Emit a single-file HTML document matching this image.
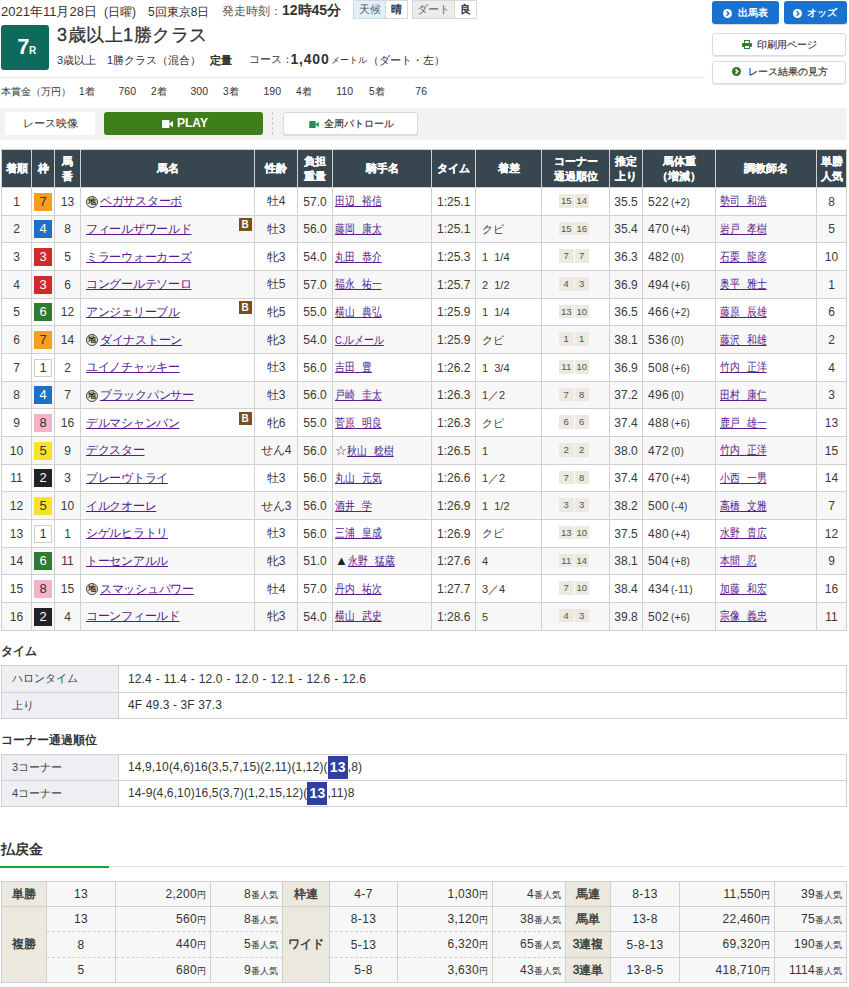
<!DOCTYPE html>
<html><head><meta charset="utf-8">
<style>
*{box-sizing:border-box;margin:0;padding:0}
html,body{width:849px;height:987px;overflow:hidden;background:#fff}
body{font-family:"Liberation Sans",sans-serif;color:#333;font-size:12px;position:relative}
.abs{position:absolute;white-space:nowrap}
a{color:#551a8b;text-decoration:underline}
b{font-weight:bold}
.rbox{left:1px;top:25px;width:48px;height:45px;background:#0d6a5c;border-radius:3px;color:#fff;font-weight:bold}
.btn-blue{background:#1a72cf;color:#fff;border-radius:3px;font-weight:bold;font-size:10px;text-align:center;height:23px;line-height:23px;top:1px;box-shadow:0 1px 1px rgba(0,0,0,.15)}
.btn-w{background:#fff;border:1px solid #dcdcdc;border-radius:3px;font-size:11px;text-align:center;box-shadow:0 1px 1px rgba(0,0,0,.10);-webkit-text-stroke:0.15px #333}
.dot{border-top:1px dotted #d2d2d2}
.wx{top:0;height:19px;border:1px solid #d8d8d8;font-size:10.5px;line-height:17px}
.wx span{display:inline-block;height:17px;vertical-align:top;text-align:center}
table{border-collapse:separate;border-spacing:0;table-layout:fixed}
#res{position:absolute;left:1px;top:149px;width:846px;border-top:1px solid #d0d0d0;border-left:1px solid #d0d0d0}
#res th,#res td{border-right:1px solid #d0d0d0;border-bottom:1px solid #d0d0d0;padding:0;white-space:nowrap;overflow:hidden}
#res th{background:#37464f;color:#fff;font-weight:bold;font-size:11px;line-height:14.5px;height:38px;-webkit-text-stroke:0.2px #fff}
#res td{font-size:12px;text-align:center;height:27.66px;padding-top:1px;color:#3a3a3a}
#res tr.e td{background:#f7f7f7}
#res td.nm,#res td.jk,#res td.df,#res td.bw,#res td.tr{text-align:left}
#res td.nm{padding-left:5px;position:relative;font-size:12px;letter-spacing:-0.3px}
#res td.jk{padding-left:2px;font-size:11.5px}
.sp{letter-spacing:5.5px}
.mk{font-size:13px;color:#222}
.sx{display:inline-block;transform:scaleX(0.82);transform-origin:0 50%}
#res td.tm{text-align:left;padding-left:5px}
#res td.df{padding-left:6px;font-size:11px}
.kb{font-size:10px}
#res td.bw{padding-left:5px;letter-spacing:0.3px}
#res td.cn{padding-right:3px}
#res td.bw small{font-size:10px;margin-left:2px}
#res td.tr{padding-left:4px;font-size:11.5px}
.wk{display:inline-block;width:18px;height:18px;line-height:18px;text-align:center;vertical-align:middle;font-size:13px}
.w1{background:#fff;border:1px solid #ccc;line-height:16px}
.w2{background:#222;color:#fff}
.w3{background:#d12a2a;color:#fff}
.w4{background:#1e6fc8;color:#fff}
.w5{background:#f7e22a;color:#333}
.w6{background:#2c7d32;color:#fff}
.w7{background:#f59e21;color:#333}
.w8{background:#f4b3c8;color:#333}
.chi{display:inline-block;width:12px;height:12px;border:1.5px solid #444;border-radius:50%;background:#e8e8e8;font-size:7.5px;line-height:9px;text-align:center;vertical-align:middle;margin-right:2px;font-weight:bold;color:#222}
.bl{position:absolute;right:2.5px;top:2.5px;width:13px;height:13px;background:#7a4f1c;color:#fff;font-size:10px;font-weight:bold;line-height:13px;text-align:center}
.cb{display:inline-block;width:14.5px;height:13.5px;line-height:13.5px;background:#ebe9e0;font-size:9.5px;margin:0 0.5px;vertical-align:middle;color:#555;position:relative;top:-1.5px}
.sec{font-size:11.5px;font-weight:bold}
.kt{position:absolute;left:1px;width:846px;border-top:1px solid #d0d0d0;border-left:1px solid #d0d0d0}
.kt td{border-right:1px solid #d0d0d0;border-bottom:1px solid #d0d0d0;height:26.5px;padding:0 0 0 9px;letter-spacing:0.12px}
.kt td.l{padding-left:10px;font-size:11px;letter-spacing:0;color:#444}
.kt td.l{background:#edeff2;width:117px}
.k2 td{height:26px}
.hl{display:inline-block;background:#303f9f;color:#fff;font-weight:bold;font-size:14px;width:20px;height:23px;line-height:23px;text-align:center;vertical-align:middle}
.pt{position:absolute;top:881px;border-top:1px solid #d0d0d0;border-left:1px solid #d0d0d0}
.pt td{border-right:1px solid #d0d0d0;border-bottom:1px solid #d0d0d0;height:25px;padding:0;background:#f7f7f7;text-align:center;white-space:nowrap;letter-spacing:0.4px}
.pt td.l{background:#ebe9dd;color:#3a3a3a;-webkit-text-stroke:0.45px #3a3a3a;letter-spacing:0}
.pt td.r{text-align:right;padding-right:4px;letter-spacing:0.3px}
.pt tr.d td{border-bottom:1px dashed #d0d0d0}
.pt tr.d td.l{border-bottom:1px solid #d0d0d0}
.pt tr.t td{height:26px}
.pt small{font-size:9px;letter-spacing:0}
</style></head><body>

<div class="abs" style="left:1px;top:3px;font-size:13px">2021年11月28日</div><div class="abs" style="left:104px;top:4px;font-size:12px">(日曜)</div><div class="abs" style="left:148px;top:4px;font-size:12px">5回東京8日</div>
<div class="abs" style="left:222px;top:3px;font-size:12px;color:#555">発走時刻：</div>
<div class="abs" style="left:282px;top:2px;font-size:14px;font-weight:bold">12時45分</div>
<div class="abs wx" style="left:353px;width:55px"><span style="width:32px;background:#e1f1fc;border-right:1px dashed #d0d0d0;color:#555">天候</span><span style="width:21px;font-weight:bold">晴</span></div>
<div class="abs wx" style="left:412px;width:65px"><span style="width:42px;background:#eeecea;border-right:1px dashed #d0d0d0;color:#666">ダート</span><span style="width:21px;font-weight:bold">良</span></div>

<div class="abs rbox"><span style="position:absolute;left:16.3px;top:11px;font-size:22px;line-height:22px">7</span><span style="position:absolute;left:28px;top:21px;font-size:10px;line-height:10px">R</span></div>
<div class="abs" style="left:57px;top:24px;font-size:18px;line-height:22px;letter-spacing:0.5px;-webkit-text-stroke:0.3px #333">3歳以上1勝クラス</div>
<div class="abs" style="left:57px;top:53px;font-size:11px">3歳以上　1勝クラス（混合）</div>
<div class="abs" style="left:210px;top:53px;font-size:11px;-webkit-text-stroke:0.5px #333">定量</div>
<div class="abs" style="left:249px;top:53px;font-size:10.5px">コース：</div>
<div class="abs" style="left:290.5px;top:51px;font-size:14px;font-weight:bold;letter-spacing:0.8px">1,400</div>
<div class="abs" style="left:331px;top:54px;font-size:9px">メートル</div>
<div class="abs" style="left:367.5px;top:53px;font-size:11px">（ダート・左）</div>

<div class="abs btn-blue" style="left:712px;width:67px"><svg width="9" height="9" viewBox="0 0 10 10" style="position:absolute;left:11px;top:7.5px"><circle cx="5" cy="5" r="5" fill="#fff"/><path d="M4 2.6 L6.4 5 L4 7.4" stroke="#1a72cf" stroke-width="1.6" fill="none"/></svg><span style="position:absolute;left:26px;top:0">出馬表</span></div>
<div class="abs btn-blue" style="left:784px;width:63px"><svg width="9" height="9" viewBox="0 0 10 10" style="position:absolute;left:9px;top:7.5px"><circle cx="5" cy="5" r="5" fill="#fff"/><path d="M4 2.6 L6.4 5 L4 7.4" stroke="#1a72cf" stroke-width="1.6" fill="none"/></svg><span style="position:absolute;left:23px;top:0">オッズ</span></div>
<div class="abs btn-w" style="left:712px;top:33px;width:134px;height:23px;line-height:21px;font-size:10px"><svg width="10" height="9" viewBox="0 0 10 9" style="position:absolute;left:29px;top:6px"><rect x="2.5" y="0.5" width="5" height="3" fill="none" stroke="#2e7d32" stroke-width="1"/><rect x="0" y="3" width="10" height="4" rx="1" fill="#2e7d32"/><rect x="2.5" y="5.5" width="5" height="3" fill="#fff" stroke="#2e7d32" stroke-width="1"/></svg><span style="position:absolute;left:44px;top:0">印刷用ページ</span></div>
<div class="abs btn-w" style="left:712px;top:61px;width:134px;height:23px;line-height:21px;font-size:10px"><svg width="9" height="9" viewBox="0 0 10 10" style="position:absolute;left:19px;top:5px"><circle cx="5" cy="5" r="5" fill="#2e7d32"/><path d="M4 2.6 L6.4 5 L4 7.4" stroke="#fff" stroke-width="1.7" fill="none"/></svg><span style="position:absolute;left:35px;top:-1.5px">レース結果の見方</span></div>

<div class="abs dot" style="left:0;top:77px;width:703px"></div>

<div class="abs" style="left:1px;top:85px;font-size:10px">本賞金（万円）</div>
<div class="abs" style="left:79px;top:85px;font-size:10px">1着</div>
<div class="abs" style="left:118px;top:85px;font-size:10.5px;width:18px;text-align:right">760</div>
<div class="abs" style="left:151px;top:85px;font-size:10px">2着</div>
<div class="abs" style="left:190px;top:85px;font-size:10.5px;width:18px;text-align:right">300</div>
<div class="abs" style="left:223px;top:85px;font-size:10px">3着</div>
<div class="abs" style="left:263px;top:85px;font-size:10.5px;width:18px;text-align:right">190</div>
<div class="abs" style="left:296px;top:85px;font-size:10px">4着</div>
<div class="abs" style="left:335px;top:85px;font-size:10.5px;width:18px;text-align:right">110</div>
<div class="abs" style="left:369px;top:85px;font-size:10px">5着</div>
<div class="abs" style="left:409px;top:85px;font-size:10.5px;width:18px;text-align:right">76</div>

<div class="abs" style="left:0;top:108px;width:847px;height:32px;background:#f2f2f2"></div>
<div class="abs" style="left:5px;top:112px;width:90px;height:23px;background:#fff;font-size:11px;line-height:23px;text-align:center">レース映像</div>
<div class="abs" style="left:104px;top:112px;width:159px;height:23px;background:#3f7f1b;border-radius:3px;color:#fff;font-weight:bold;font-size:12px;line-height:23px;text-align:center"><svg width="11" height="8" viewBox="0 0 11 8" style="position:absolute;left:58px;top:8px"><rect x="0" y="0" width="7.5" height="8" rx="1" fill="#fff"/><path d="M7 4 L11 0.8 L11 7.2 Z" fill="#fff"/></svg><span style="position:absolute;left:73px;top:0">PLAY</span></div>
<div class="abs" style="left:272px;top:112px;height:23px;border-left:1px dashed #c8c8c8"></div>
<div class="abs btn-w" style="left:283px;top:112px;width:135px;height:23px;line-height:21px;font-size:10px"><svg width="10" height="7" viewBox="0 0 11 8" style="position:absolute;left:25px;top:7.5px"><rect x="0" y="0" width="7.5" height="8" rx="1" fill="#2e8b57"/><path d="M7 4 L11 0.8 L11 7.2 Z" fill="#2e8b57"/></svg><span style="position:absolute;left:40px;top:0">全周パトロール</span></div>

<table id="res">
<colgroup><col style="width:30px"><col style="width:23px"><col style="width:26px"><col style="width:174px"><col style="width:43px"><col style="width:35px"><col style="width:99px"><col style="width:44px"><col style="width:66px"><col style="width:68px"><col style="width:33px"><col style="width:73px"><col style="width:101px"><col style="width:30px"></colgroup>
<tr><th>着順</th><th>枠</th><th>馬<br>番</th><th>馬名</th><th>性齢</th><th>負担<br>重量</th><th>騎手名</th><th>タイム</th><th>着差</th><th>コーナー<br>通過順位</th><th>推定<br>上り</th><th>馬体重<br>（増減）</th><th>調教師名</th><th>単勝<br>人気</th></tr>
<tr class="o"><td>1</td><td><span class="wk w7">7</span></td><td>13</td><td class="nm"><span class="chi">地</span><a>ペガサスターボ</a></td><td>牡4</td><td>57.0</td><td class="jk"><a class="sx">田辺<span class="sp">&nbsp;</span>裕信</a></td><td class="tm">1:25.1</td><td class="df"></td><td class="cn"><span class="cb">15</span><span class="cb">14</span></td><td>35.5</td><td class="bw">522<small>(+2)</small></td><td class="tr"><a class="sx">勢司<span class="sp">&nbsp;</span>和浩</a></td><td>8</td></tr>
<tr class="e"><td>2</td><td><span class="wk w4">4</span></td><td>8</td><td class="nm"><a>フィールザワールド</a><span class="bl">B</span></td><td>牡3</td><td>56.0</td><td class="jk"><a class="sx">藤岡<span class="sp">&nbsp;</span>康太</a></td><td class="tm">1:25.1</td><td class="df"><span&nbsp;&nbsp;class="kb">クビ</span></td><td class="cn"><span class="cb">15</span><span class="cb">16</span></td><td>35.4</td><td class="bw">470<small>(+4)</small></td><td class="tr"><a class="sx">岩戸<span class="sp">&nbsp;</span>孝樹</a></td><td>5</td></tr>
<tr class="o"><td>3</td><td><span class="wk w3">3</span></td><td>5</td><td class="nm"><a>ミラーウォーカーズ</a></td><td>牝3</td><td>54.0</td><td class="jk"><a class="sx">丸田<span class="sp">&nbsp;</span>恭介</a></td><td class="tm">1:25.3</td><td class="df">1&nbsp;&nbsp;1/4</td><td class="cn"><span class="cb">7</span><span class="cb">7</span></td><td>36.3</td><td class="bw">482<small>(0)</small></td><td class="tr"><a class="sx">石栗<span class="sp">&nbsp;</span>龍彦</a></td><td>10</td></tr>
<tr class="e"><td>4</td><td><span class="wk w3">3</span></td><td>6</td><td class="nm"><a>コングールテソーロ</a></td><td>牡5</td><td>57.0</td><td class="jk"><a class="sx">福永<span class="sp">&nbsp;</span>祐一</a></td><td class="tm">1:25.7</td><td class="df">2&nbsp;&nbsp;1/2</td><td class="cn"><span class="cb">4</span><span class="cb">3</span></td><td>36.9</td><td class="bw">494<small>(+6)</small></td><td class="tr"><a class="sx">奥平<span class="sp">&nbsp;</span>雅士</a></td><td>1</td></tr>
<tr class="o"><td>5</td><td><span class="wk w6">6</span></td><td>12</td><td class="nm"><a>アンジェリーブル</a><span class="bl">B</span></td><td>牝5</td><td>55.0</td><td class="jk"><a class="sx">横山<span class="sp">&nbsp;</span>典弘</a></td><td class="tm">1:25.9</td><td class="df">1&nbsp;&nbsp;1/4</td><td class="cn"><span class="cb">13</span><span class="cb">10</span></td><td>36.5</td><td class="bw">466<small>(+2)</small></td><td class="tr"><a class="sx">藤原<span class="sp">&nbsp;</span>辰雄</a></td><td>6</td></tr>
<tr class="e"><td>6</td><td><span class="wk w7">7</span></td><td>14</td><td class="nm"><span class="chi">地</span><a>ダイナストーン</a></td><td>牝3</td><td>54.0</td><td class="jk"><a class="sx">C.ルメール</a></td><td class="tm">1:25.9</td><td class="df"><span&nbsp;&nbsp;class="kb">クビ</span></td><td class="cn"><span class="cb">1</span><span class="cb">1</span></td><td>38.1</td><td class="bw">536<small>(0)</small></td><td class="tr"><a class="sx">藤沢<span class="sp">&nbsp;</span>和雄</a></td><td>2</td></tr>
<tr class="o"><td>7</td><td><span class="wk w1">1</span></td><td>2</td><td class="nm"><a>ユイノチャッキー</a></td><td>牡3</td><td>56.0</td><td class="jk"><a class="sx">吉田<span class="sp">&nbsp;</span>豊</a></td><td class="tm">1:26.2</td><td class="df">1&nbsp;&nbsp;3/4</td><td class="cn"><span class="cb">11</span><span class="cb">10</span></td><td>36.9</td><td class="bw">508<small>(+6)</small></td><td class="tr"><a class="sx">竹内<span class="sp">&nbsp;</span>正洋</a></td><td>4</td></tr>
<tr class="e"><td>8</td><td><span class="wk w4">4</span></td><td>7</td><td class="nm"><span class="chi">地</span><a>ブラックパンサー</a></td><td>牡3</td><td>56.0</td><td class="jk"><a class="sx">戸崎<span class="sp">&nbsp;</span>圭太</a></td><td class="tm">1:26.3</td><td class="df">1／2</td><td class="cn"><span class="cb">7</span><span class="cb">8</span></td><td>37.2</td><td class="bw">496<small>(0)</small></td><td class="tr"><a class="sx">田村<span class="sp">&nbsp;</span>康仁</a></td><td>3</td></tr>
<tr class="o"><td>9</td><td><span class="wk w8">8</span></td><td>16</td><td class="nm"><a>デルマシャンバン</a><span class="bl">B</span></td><td>牝6</td><td>55.0</td><td class="jk"><a class="sx">菅原<span class="sp">&nbsp;</span>明良</a></td><td class="tm">1:26.3</td><td class="df"><span&nbsp;&nbsp;class="kb">クビ</span></td><td class="cn"><span class="cb">6</span><span class="cb">6</span></td><td>37.4</td><td class="bw">488<small>(+6)</small></td><td class="tr"><a class="sx">鹿戸<span class="sp">&nbsp;</span>雄一</a></td><td>13</td></tr>
<tr class="e"><td>10</td><td><span class="wk w5">5</span></td><td>9</td><td class="nm"><a>デクスター</a></td><td>せん4</td><td>56.0</td><td class="jk"><span class="mk">☆</span><a class="sx">秋山<span class="sp">&nbsp;</span>稔樹</a></td><td class="tm">1:26.5</td><td class="df">1</td><td class="cn"><span class="cb">2</span><span class="cb">2</span></td><td>38.0</td><td class="bw">472<small>(0)</small></td><td class="tr"><a class="sx">竹内<span class="sp">&nbsp;</span>正洋</a></td><td>15</td></tr>
<tr class="o"><td>11</td><td><span class="wk w2">2</span></td><td>3</td><td class="nm"><a>ブレーヴトライ</a></td><td>牡3</td><td>56.0</td><td class="jk"><a class="sx">丸山<span class="sp">&nbsp;</span>元気</a></td><td class="tm">1:26.6</td><td class="df">1／2</td><td class="cn"><span class="cb">7</span><span class="cb">8</span></td><td>37.4</td><td class="bw">470<small>(+4)</small></td><td class="tr"><a class="sx">小西<span class="sp">&nbsp;</span>一男</a></td><td>14</td></tr>
<tr class="e"><td>12</td><td><span class="wk w5">5</span></td><td>10</td><td class="nm"><a>イルクオーレ</a></td><td>せん3</td><td>56.0</td><td class="jk"><a class="sx">酒井<span class="sp">&nbsp;</span>学</a></td><td class="tm">1:26.9</td><td class="df">1&nbsp;&nbsp;1/2</td><td class="cn"><span class="cb">3</span><span class="cb">3</span></td><td>38.2</td><td class="bw">500<small>(-4)</small></td><td class="tr"><a class="sx">高橋<span class="sp">&nbsp;</span>文雅</a></td><td>7</td></tr>
<tr class="o"><td>13</td><td><span class="wk w1">1</span></td><td>1</td><td class="nm"><a>シゲルヒラトリ</a></td><td>牡3</td><td>56.0</td><td class="jk"><a class="sx">三浦<span class="sp">&nbsp;</span>皇成</a></td><td class="tm">1:26.9</td><td class="df"><span&nbsp;&nbsp;class="kb">クビ</span></td><td class="cn"><span class="cb">13</span><span class="cb">10</span></td><td>37.5</td><td class="bw">480<small>(+4)</small></td><td class="tr"><a class="sx">水野<span class="sp">&nbsp;</span>貴広</a></td><td>12</td></tr>
<tr class="e"><td>14</td><td><span class="wk w6">6</span></td><td>11</td><td class="nm"><a>トーセンアルル</a></td><td>牝3</td><td>51.0</td><td class="jk"><span class="mk">▲</span><a class="sx">永野<span class="sp">&nbsp;</span>猛蔵</a></td><td class="tm">1:27.6</td><td class="df">4</td><td class="cn"><span class="cb">11</span><span class="cb">14</span></td><td>38.1</td><td class="bw">504<small>(+8)</small></td><td class="tr"><a class="sx">本間<span class="sp">&nbsp;</span>忍</a></td><td>9</td></tr>
<tr class="o"><td>15</td><td><span class="wk w8">8</span></td><td>15</td><td class="nm"><span class="chi">地</span><a>スマッシュパワー</a></td><td>牡4</td><td>57.0</td><td class="jk"><a class="sx">丹内<span class="sp">&nbsp;</span>祐次</a></td><td class="tm">1:27.7</td><td class="df">3／4</td><td class="cn"><span class="cb">7</span><span class="cb">10</span></td><td>38.4</td><td class="bw">434<small>(-11)</small></td><td class="tr"><a class="sx">加藤<span class="sp">&nbsp;</span>和宏</a></td><td>16</td></tr>
<tr class="e"><td>16</td><td><span class="wk w2">2</span></td><td>4</td><td class="nm"><a>コーンフィールド</a></td><td>牝3</td><td>54.0</td><td class="jk"><a class="sx">横山<span class="sp">&nbsp;</span>武史</a></td><td class="tm">1:28.6</td><td class="df">5</td><td class="cn"><span class="cb">4</span><span class="cb">3</span></td><td>39.8</td><td class="bw">502<small>(+6)</small></td><td class="tr"><a class="sx">宗像<span class="sp">&nbsp;</span>義忠</a></td><td>11</td></tr>
</table>

<div class="abs sec" style="left:1px;top:643.5px">タイム</div>
<table class="kt" style="top:665px">
<tr><td class="l">ハロンタイム</td><td style="word-spacing:0.5px">12.4 - 11.4 - 12.0 - 12.0 - 12.1 - 12.6 - 12.6</td></tr>
<tr><td class="l">上り</td><td>4F 49.3 - 3F 37.3</td></tr>
</table>

<div class="abs sec" style="left:1px;top:733px">コーナー通過順位</div>
<table class="kt k2" style="top:754px">
<tr><td class="l">3コーナー</td><td>14,9,10(4,6)16(3,5,7,15)(2,11)(1,12)(<span class="hl">13</span>,8)</td></tr>
<tr><td class="l">4コーナー</td><td>14-9(4,6,10)16,5(3,7)(1,2,15,12)(<span class="hl">13</span>,11)8</td></tr>
</table>

<div class="abs" style="left:1px;top:841px;font-size:14px;font-weight:bold">払戻金</div>
<div class="abs" style="left:0;top:866px;width:846px;height:1px;background:#dedede"></div>
<div class="abs" style="left:0;top:865.5px;width:109px;height:2px;background:#13a53a"></div>

<table class="pt" style="left:1px">
<colgroup><col style="width:45px"><col style="width:69px"><col style="width:95px"><col style="width:72px"></colgroup>
<tr><td class="l">単勝</td><td>13</td><td class="r">2,200<small>円</small></td><td class="r">8<small>番人気</small></td></tr>
<tr class="d"><td class="l" rowspan="3">複勝</td><td>13</td><td class="r">560<small>円</small></td><td class="r">8<small>番人気</small></td></tr>
<tr class="d t"><td>8</td><td class="r">440<small>円</small></td><td class="r">5<small>番人気</small></td></tr>
<tr><td>5</td><td class="r">680<small>円</small></td><td class="r">9<small>番人気</small></td></tr>
</table>
<table class="pt" style="left:283px;border-left:none">
<colgroup><col style="width:47px"><col style="width:68px"><col style="width:95px"><col style="width:73px"></colgroup>
<tr><td class="l">枠連</td><td>4-7</td><td class="r">1,030<small>円</small></td><td class="r">4<small>番人気</small></td></tr>
<tr class="d"><td class="l" rowspan="3">ワイド</td><td>8-13</td><td class="r">3,120<small>円</small></td><td class="r">38<small>番人気</small></td></tr>
<tr class="d t"><td>5-13</td><td class="r">6,320<small>円</small></td><td class="r">65<small>番人気</small></td></tr>
<tr><td>5-8</td><td class="r">3,630<small>円</small></td><td class="r">43<small>番人気</small></td></tr>
</table>
<table class="pt" style="left:566px;border-left:none">
<colgroup><col style="width:45px"><col style="width:69px"><col style="width:95px"><col style="width:72px"></colgroup>
<tr><td class="l">馬連</td><td>8-13</td><td class="r">11,550<small>円</small></td><td class="r">39<small>番人気</small></td></tr>
<tr><td class="l">馬単</td><td>13-8</td><td class="r">22,460<small>円</small></td><td class="r">75<small>番人気</small></td></tr>
<tr class="t"><td class="l">3連複</td><td>5-8-13</td><td class="r">69,320<small>円</small></td><td class="r">190<small>番人気</small></td></tr>
<tr><td class="l">3連単</td><td>13-8-5</td><td class="r">418,710<small>円</small></td><td class="r">1114<small>番人気</small></td></tr>
</table>

</body></html>
